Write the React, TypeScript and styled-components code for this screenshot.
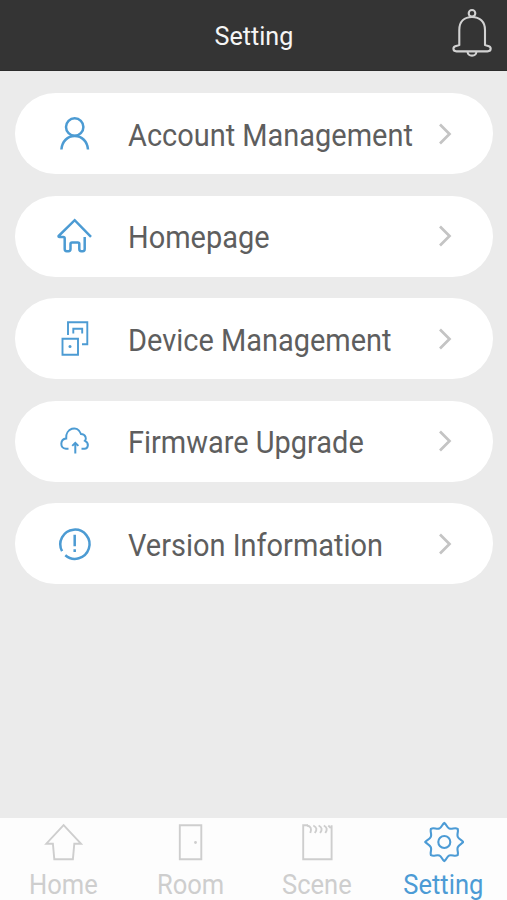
import React from "react";
import styled, { createGlobalStyle } from "styled-components";

const GlobalStyle = createGlobalStyle`
  * { box-sizing: border-box; }
  html, body { margin: 0; padding: 0; background: #ebebeb; }
  body { font-family: Roboto, "Liberation Sans", sans-serif; overflow: hidden; }
`;

const Screen = styled.div`
  display: flex;
  flex-direction: column;
  width: 507px;
  height: 900px;
  background: #ebebeb;
`;

const Header = styled.header`
  display: grid;
  grid-template-columns: 1fr auto 1fr;
  align-items: center;
  height: 71px;
  flex: none;
  background: #343434;
  border-bottom: 1px solid #2b2b2b;
`;

const Title = styled.h1`
  grid-column: 2;
  margin: 0;
  padding-top: 1px;
  font-size: 25.5px;
  line-height: 30px;
  font-weight: 400;
  color: #f5f5f5;
  transform: scaleX(0.985);
`;

const BellButton = styled.button`
  justify-self: end;
  display: flex;
  margin: 0 10px 2px 0;
  padding: 0;
  border: 0;
  background: none;
`;

const Menu = styled.main`
  flex: 1;
  display: flex;
  flex-direction: column;
  gap: 21.6px;
  padding: 22px 14px 0 15px;
`;

const MenuRow = styled.a`
  display: flex;
  align-items: center;
  height: 81px;
  flex: none;
  padding: 0 38px 0 40px;
  border-radius: 41px;
  background: #fff;
`;

const MenuLabel = styled.span`
  flex: 1;
  margin-left: 32.5px;
  padding-top: 4px;
  font-size: 31px;
  line-height: 36px;
  white-space: nowrap;
  color: #5e5e5e;
  transform: scaleX(0.934);
  transform-origin: left center;
`;

const Glyph = styled.svg`
  display: block;
  flex: none;
  fill: none;
  stroke: currentColor;
`;

const BlueGlyph = styled(Glyph)`
  color: #4c9bd3;
  stroke-width: 2.5;
`;

const TabBar = styled.nav`
  display: flex;
  height: 82px;
  flex: none;
  padding: 3px 0 0 0;
  background: #fdfdfd;
`;

const Tab = styled.a<{ $active?: boolean }>`
  flex: 1;
  display: flex;
  flex-direction: column;
  align-items: center;
  color: ${(p) => (p.$active ? "#4c9bd5" : "#cecece")};
`;

const TabLabel = styled.span`
  margin-top: 6px;
  font-size: 27px;
  line-height: 32px;
  transform: scaleX(0.945);
`;

const menu = [
  {
    label: "Account Management",
    icon: (
      <>
        <circle cx="19.7" cy="13" r="8.7" />
        <path d="M6.4 35.5C7 27.5 12.5 22 19.7 22S32.4 27.5 33 35.5" />
      </>
    ),
  },
  {
    label: "Homepage",
    icon: (
      <path d="M36 20.9L19.7 4.2L3.6 20Q3.2 21.1 4.5 21.1H8.3Q9.7 21.1 9.7 22.6V33.1Q9.7 35.2 11.7 35.2H13.5Q15.5 35.2 15.5 33.1V28.1Q15.5 26.6 17 26.6H22.8Q24.3 26.6 24.3 28.1V33.1Q24.3 35.2 26.3 35.2H27.7Q29.7 35.2 29.7 33.1V21.1" />
    ),
  },
  {
    label: "Device Management",
    icon: (
      <g strokeWidth="1.9">
        <path d="M13 16V3.2H32.3V25.3H27M18.3 14.5V9.7H27.2V14.5" />
        <path d="M7.5 19.7H23V35.7H7.5Z" />
        <circle cx="15" cy="27.6" r="1.5" fill="currentColor" stroke="none" />
      </g>
    ),
  },
  {
    label: "Firmware Upgrade",
    icon: (
      <g strokeWidth="2">
        <path d="M13.5 27.8H11C4.5 27 5 18.2 11.2 17.5C10.2 7.5 22.5 3.2 26 13C31 13.2 31.7 18 30 19.8C34.5 22 33.2 27.8 29.5 27.8H26.5" />
        <path d="M20.3 32.5V22.5M17.2 24.9L20.3 21.9L23.4 24.9" />
      </g>
    ),
  },
  {
    label: "Version Information",
    icon: (
      <>
        <path d="M7.1 27.2A14.6 14.6 0 1 1 10.3 31.2" />
        <path d="M19.7 10.8V22.3M19.7 25.3V28" />
      </>
    ),
  },
];

const tabs = [
  {
    label: "Home",
    icon: <path d="M20.6 4.2L37.9 22.7H31.3L29.9 38.2H11.3L9.9 22.7H3.3Z" />,
  },
  {
    label: "Room",
    icon: (
      <>
        <path d="M9.8 4.2H31.3V38.2H9.8Z" />
        <circle cx="25.5" cy="21.5" r="1.4" fill="currentColor" stroke="none" />
      </>
    ),
  },
  {
    label: "Scene",
    icon: (
      <>
        <path d="M11 4.2H6.2V38.2H34.6V4.2" />
        <path d="M10 4.5Q15.8 5.5 13.3 12M16.3 4.5Q21.6 7 17.8 12M21.6 4.5Q26.8 7 23.1 12M26.8 4.5Q31.8 7 28.3 12M31.3 4.5L33.8 7" />
      </>
    ),
  },
  {
    label: "Setting",
    active: true,
    icon: (
      <>
        <circle cx="20.3" cy="21" r="6" />
        <path transform="translate(0.3 0)" d="M20 2C22 3 22.5 6.5 25 7.6C28 8.5 30.5 6.2 33.3 7.8C34.5 10.5 32.3 13 33.5 15.8C34.6 18.3 37.5 19 39 21C37.5 23 34.6 23.8 33.5 26.2C32.3 29 34.5 31.5 33.3 34.2C30.5 35.8 28 33.5 25 34.4C22.5 35.5 22 39 20 40C18 39 17.5 35.5 15 34.4C12 33.5 9.5 35.8 6.7 34.2C5.5 31.5 7.7 29 6.5 26.2C5.4 23.8 2.5 23 1 21C2.5 19 5.4 18.3 6.5 15.8C7.7 13 5.5 10.5 6.7 7.8C9.5 6.2 12 8.5 15 7.6C17.5 6.5 18 3 20 2Z" />
      </>
    ),
  },
];

export default function App() {
  return (
    <>
      <GlobalStyle />
      <Screen>
        <Header>
          <Title>Setting</Title>
          <BellButton aria-label="Notifications">
            <Glyph width="50" height="56" viewBox="447 6 50 56" color="#d2d2d2" strokeWidth="2.1">
              <circle cx="472" cy="13.3" r="3.3" />
              <path d="M459.3 45V30C459.3 21.5 464.5 17 472 17S485 21.5 485 30V45C486.5 46.3 490.7 45 490.7 48.6Q490.7 51.4 487.5 51.4H456.5Q453.4 51.4 453.4 48.6C453.4 45 458 46.3 459.3 45Z" />
              <path d="M467.5 51.5C468 57 476 57 476.5 51.5" />
            </Glyph>
          </BellButton>
        </Header>
        <Menu>
          {menu.map((item) => (
            <MenuRow key={item.label}>
              <BlueGlyph width="40" height="40" viewBox="0 0 40 40">
                {item.icon}
              </BlueGlyph>
              <MenuLabel>{item.label}</MenuLabel>
              <Glyph width="18" height="26" viewBox="0 0 18 26" color="#c4c4c4" strokeWidth="2.7">
                <path d="M3 3.5L12.5 13L3 22.5" />
              </Glyph>
            </MenuRow>
          ))}
        </Menu>
        <TabBar>
          {tabs.map((tab) => (
            <Tab key={tab.label} $active={tab.active}>
              <Glyph width="40" height="42" viewBox="0 0 40 42" strokeWidth={tab.active ? 2.1 : 1.9}>
                {tab.icon}
              </Glyph>
              <TabLabel>{tab.label}</TabLabel>
            </Tab>
          ))}
        </TabBar>
      </Screen>
    </>
  );
}
